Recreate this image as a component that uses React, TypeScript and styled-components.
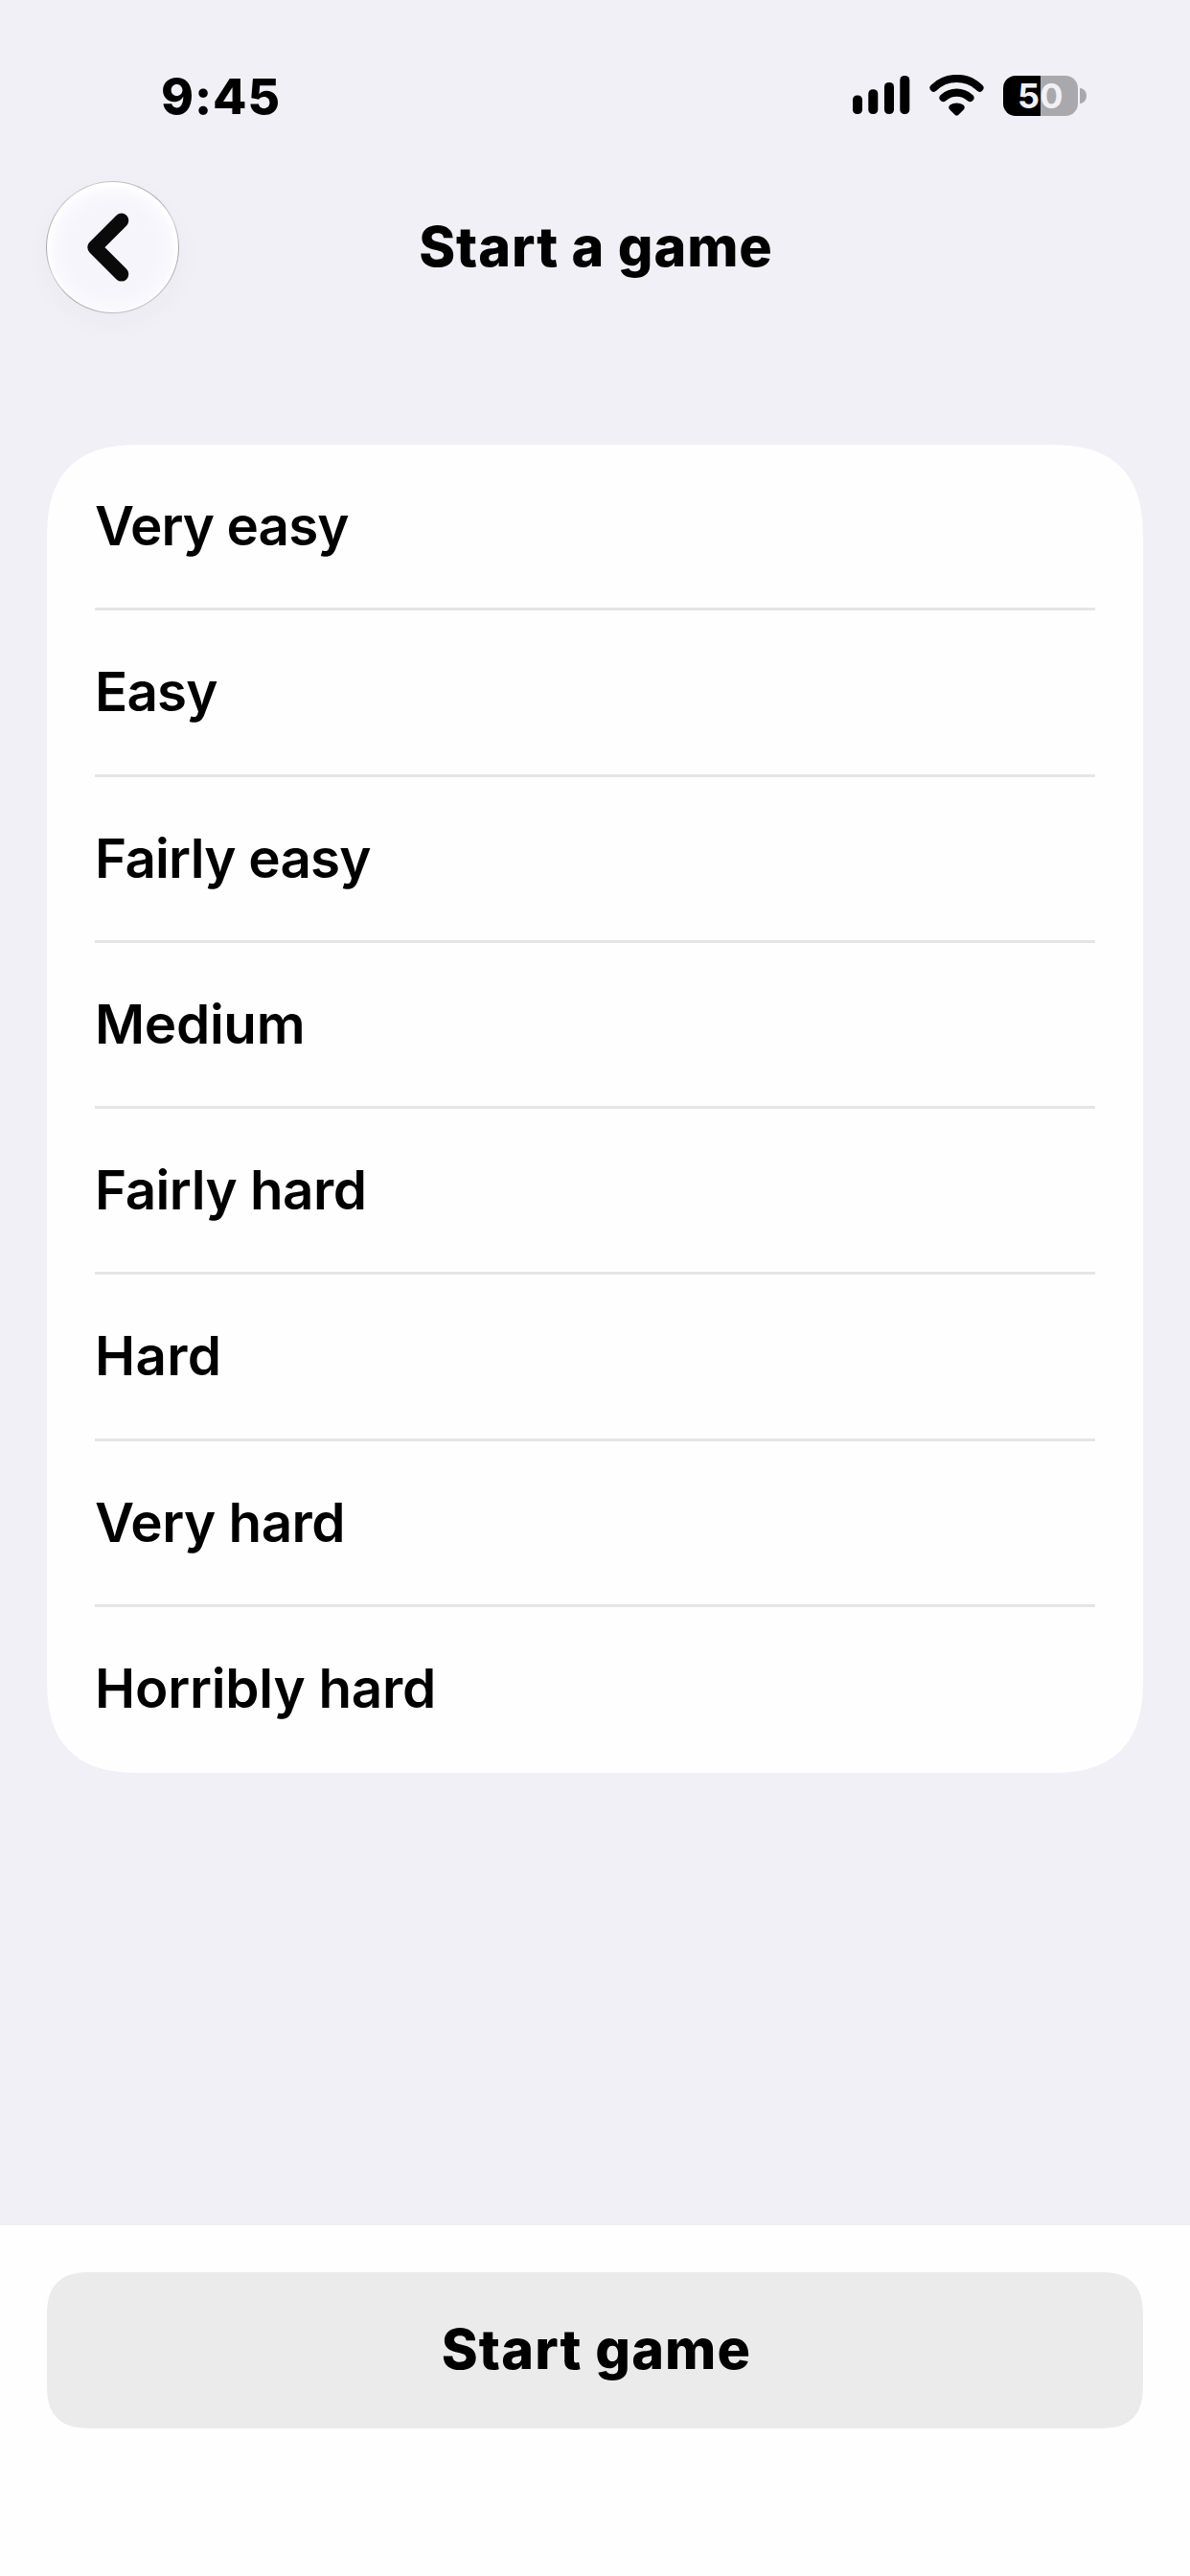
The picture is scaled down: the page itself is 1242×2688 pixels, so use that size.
import React from "react";
import styled, { createGlobalStyle } from "styled-components";

const GlobalStyle = createGlobalStyle`
  * { box-sizing: border-box; }
  html, body { margin: 0; padding: 0; background: #f1f0f6; }
  body { font-family: Inter, "Liberation Sans", sans-serif; color: #000; }
  button { font: inherit; color: inherit; border: 0; padding: 0; }
`;

const Screen = styled.div`
  display: flex;
  flex-direction: column;
  width: 1242px;
  height: 2688px;
  overflow: hidden;
  background: #f1f0f6;
`;

const StatusBar = styled.div`
  display: flex;
  justify-content: space-between;
  align-items: center;
  flex: none;
  height: 130px;
  margin-top: 35px;
  padding: 0 108px 0 168px;
`;

const Time = styled.time`
  font-size: 51.5px;
  font-weight: 800;
  line-height: 60px;
  letter-spacing: 0.9px;
`;

const StatusIcons = styled.div`
  display: flex;
  align-items: center;
`;

const StatusGlyph = styled.svg`
  display: block;
  margin-right: 20px;
`;

const Battery = styled.div`
  display: flex;
  align-items: center;
  gap: 2px;
`;

const BatteryBody = styled.div`
  display: flex;
  align-items: center;
  justify-content: center;
  width: 78px;
  height: 42px;
  border-radius: 13px;
  background: linear-gradient(to right, #000 39px, #a9a8ad 39px);
  color: #f1f0f6;
  font-size: 36px;
  font-weight: 700;
  line-height: 42px;
  letter-spacing: 0.4px;
`;

const BatteryCap = styled.div`
  width: 7px;
  height: 16px;
  border-radius: 0 7px 7px 0 / 0 8px 8px 0;
  background: #a9a8ad;
`;

const NavBar = styled.header`
  display: grid;
  grid-template-columns: 138px 1fr 138px;
  align-items: center;
  flex: none;
  height: 138px;
  margin-top: 24px;
  padding: 0 48px;
`;

const BackButton = styled.button`
  display: flex;
  align-items: center;
  justify-content: center;
  width: 139px;
  height: 138px;
  padding-right: 10px;
  border-radius: 50%;
  background:
    radial-gradient(circle at 50% 52%, #f6f5fb 0 46%, #f8f8fd 60%, #ffffff 70%) padding-box,
    linear-gradient(155deg, #d2d2d6 0%, #c9c9cd 12%, #a8a8ac 35%, #d0d0d4 50%, #a8a8ac 68%, #d2d2d6 100%) border-box;
  border: 1.5px solid transparent;
  box-shadow: 0 10px 30px rgba(60, 55, 90, 0.03);
`;

const Title = styled.h1`
  margin: 0 0 2px;
  padding-left: 2px;
  text-align: center;
  font-size: 57.5px;
  font-weight: 800;
  line-height: 70px;
  letter-spacing: 0.9px;
`;

const Levels = styled.ul`
  flex: none;
  margin: 137px 49px 0;
  padding: 0 50px;
  height: 1386px;
  list-style: none;
  display: grid;
  grid-template-rows: repeat(8, 1fr);
  border-radius: 82px;
  background: #fefefe;
  @supports (corner-shape: superellipse(1.4)) {
    border-radius: 101px;
    corner-shape: superellipse(1.4);
  }
`;

const Level = styled.li<{ $tracking: number }>`
  display: flex;
  align-items: center;
  border-bottom: 3px solid #e5e5e5;
  font-size: 56.5px;
  font-weight: 600;
  line-height: 70px;
  letter-spacing: ${(p) => p.$tracking}px;
  &:last-child { border-bottom-color: transparent; }
`;

const Footer = styled.footer`
  display: flex;
  align-items: flex-start;
  height: 366px;
  margin-top: auto;
  padding: 49px 49px 0;
  background: #fefefe;
`;

const StartButton = styled.button`
  flex: 1;
  height: 163px;
  padding: 0 0 4px 3px;
  border-radius: 38px;
  background: #ebebeb;
  font-size: 57.5px;
  font-weight: 800;
  letter-spacing: 1.1px;
  @supports (corner-shape: superellipse(1.4)) {
    border-radius: 46px;
    corner-shape: superellipse(1.4);
  }
`;

const levels = [
  { name: "Very easy", tracking: -0.9 },
  { name: "Easy", tracking: -0.8 },
  { name: "Fairly easy", tracking: -0.75 },
  { name: "Medium", tracking: -0.3 },
  { name: "Fairly hard", tracking: -0.5 },
  { name: "Hard", tracking: 0.3 },
  { name: "Very hard", tracking: -0.5 },
  { name: "Horribly hard", tracking: -0.2 },
];

export default function App() {
  return (
    <>
      <GlobalStyle />
      <Screen>
        <StatusBar>
          <Time>9:45</Time>
          <StatusIcons>
            <StatusGlyph width="60" height="42" viewBox="0 0 60 42">
              <rect x="0" y="20.5" width="10" height="19.5" rx="4.6" />
              <rect x="16.3" y="14.2" width="10" height="25.8" rx="4.6" />
              <rect x="33" y="7" width="10" height="33" rx="4.6" />
              <rect x="49.3" y="0" width="10" height="40" rx="4.6" />
            </StatusGlyph>
            <StatusGlyph width="57" height="44" viewBox="0 0 57 44">
              <g fill="none" stroke="#000" strokeWidth="8.2" strokeLinecap="round">
                <path d="M4.6 13.6 A34.5 34.5 0 0 1 52.4 13.6" />
                <path d="M14.6 24 A20.5 20.5 0 0 1 42.4 24" />
              </g>
              <path d="M21.6 31.6 C25.4 28.7 31.6 28.7 35.4 31.6 C37.2 33 37.2 35 35.7 36.4 L30.4 41.7 C29.2 42.9 27.8 42.9 26.6 41.7 L21.3 36.4 C19.8 35 19.8 33 21.6 31.6 Z" />
            </StatusGlyph>
            <Battery>
              <BatteryBody>50</BatteryBody>
              <BatteryCap />
            </Battery>
          </StatusIcons>
        </StatusBar>
        <NavBar>
          <BackButton aria-label="Back">
            <svg width="44" height="72" viewBox="0 0 44 72">
              <path d="M35.8 8.1 L7.8 36.1 L35.8 64.1" fill="none" stroke="#0a0a0b" strokeWidth="15" strokeLinecap="round" strokeLinejoin="round" />
            </svg>
          </BackButton>
          <Title>Start a game</Title>
        </NavBar>
        <Levels>
          {levels.map((level) => (
            <Level key={level.name} $tracking={level.tracking}>{level.name}</Level>
          ))}
        </Levels>
        <Footer>
          <StartButton>Start game</StartButton>
        </Footer>
      </Screen>
    </>
  );
}
